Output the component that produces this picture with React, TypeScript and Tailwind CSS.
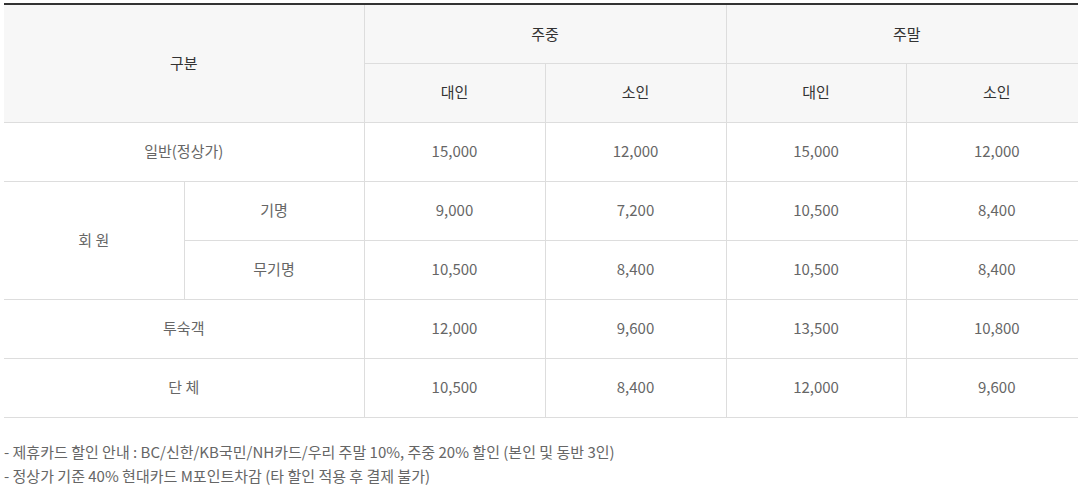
const font = { fontFamily: '"Noto Sans CJK KR", "Noto Sans", sans-serif' };

const rows = [
  { label: "일반(정상가)", values: ["15,000", "12,000", "15,000", "12,000"] },
  { label: "투숙객", values: ["12,000", "9,600", "13,500", "10,800"] },
  { label: "단 체", values: ["10,500", "8,400", "12,000", "9,600"] },
];

const th = "h-[59px] border-b border-l border-[#dddddd] bg-[#f7f7f7] text-[15px] font-normal text-[#333333] text-center";
const td = "h-[59px] border-b border-l border-[#dddddd] text-[15px] text-[#666666] text-center";

function ValueCells({ values }: { values: string[] }) {
  return (
    <>
      {values.map((v, i) => (
        <td key={i} className={td}>
          {v}
        </td>
      ))}
    </>
  );
}

export default function App() {
  return (
    <div className="bg-white pt-[3px] pl-1 overflow-hidden w-[1078px]" style={font}>
      <table className="table-fixed border-collapse w-[1083px] border-t-2 border-[#333333]">
        <colgroup>
          <col className="w-[180px]" />
          <col className="w-[180px]" />
          <col className="w-[181px]" />
          <col className="w-[181px]" />
          <col className="w-[180px]" />
          <col className="w-[181px]" />
        </colgroup>
        <thead>
          <tr>
            <th colSpan={2} rowSpan={2} className={th + " border-l-0"}>
              구분
            </th>
            <th colSpan={2} className={th}>
              주중
            </th>
            <th colSpan={2} className={th}>
              주말
            </th>
          </tr>
          <tr>
            <th className={th}>대인</th>
            <th className={th}>소인</th>
            <th className={th}>대인</th>
            <th className={th}>소인</th>
          </tr>
        </thead>
        <tbody>
          <tr>
            <td colSpan={2} className={td + " border-l-0"}>
              {rows[0].label}
            </td>
            <ValueCells values={rows[0].values} />
          </tr>
          <tr>
            <td rowSpan={2} className={td + " border-l-0"}>
              회 원
            </td>
            <td className={td}>기명</td>
            <ValueCells values={["9,000", "7,200", "10,500", "8,400"]} />
          </tr>
          <tr>
            <td className={td}>무기명</td>
            <ValueCells values={["10,500", "8,400", "10,500", "8,400"]} />
          </tr>
          {rows.slice(1).map((r) => (
            <tr key={r.label}>
              <td colSpan={2} className={td + " border-l-0"}>
                {r.label}
              </td>
              <ValueCells values={r.values} />
            </tr>
          ))}
        </tbody>
      </table>

      <div className="mt-[22px] text-[15px] leading-[24px] text-[#666666]">
        <p>- 제휴카드 할인 안내 : BC/신한/KB국민/NH카드/우리 주말 10%, 주중 20% 할인 (본인 및 동반 3인)</p>
        <p>- 정상가 기준 40% 현대카드 M포인트차감 (타 할인 적용 후 결제 불가)</p>
      </div>
    </div>
  );
}
